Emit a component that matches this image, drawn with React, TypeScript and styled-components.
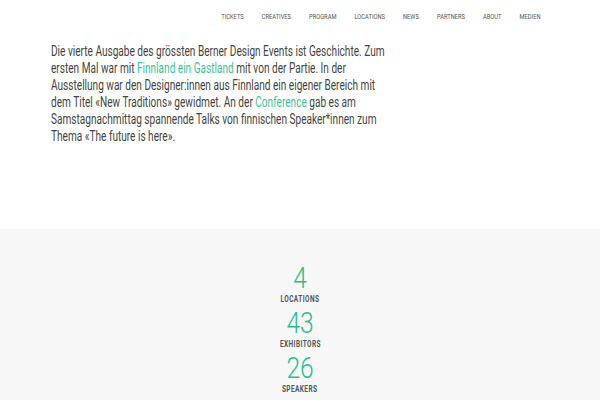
import styled, { createGlobalStyle } from "styled-components";

const GlobalStyle = createGlobalStyle`
  html, body {
    margin: 0;
    padding: 0;
    background: #ffffff;
  }
  body {
    font-family: "Roboto", "Liberation Sans", sans-serif;
    color: #3a3a3a;
  }
`;

const NAV_ITEMS = [
  "Tickets",
  "Creatives",
  "Program",
  "Locations",
  "News",
  "Partners",
  "About",
  "Medien",
];

const STATS = [
  { value: 4, label: "Locations" },
  { value: 43, label: "Exhibitors" },
  { value: 26, label: "Speakers" },
];

// the site uses a condensed grotesk; no condensed face is installed,
// so the Roboto text gets squeezed horizontally
const SQUEEZE = 0.72;

const Page = styled.div`
  width: 600px;
  height: 400px;
  overflow: hidden;
  display: flex;
  flex-direction: column;
`;

const NavBar = styled.nav`
  display: flex;
  justify-content: flex-end;
  padding: 11px 59px 0 0;
  height: 23px;
`;

const NavList = styled.div`
  display: flex;
  gap: 25px;
  transform: scaleX(${SQUEEZE});
  transform-origin: right top;
`;

const NavLink = styled.a`
  font-size: 8px;
  line-height: 12px;
  text-transform: uppercase;
  color: #555555;
  text-decoration: none;
`;

const Intro = styled.section`
  height: 195px;
  padding: 9px 0 0 51px;
  box-sizing: border-box;
`;

const Text = styled.p`
  margin: 0;
  width: 478px;
  font-size: 14px;
  line-height: 17px;
  color: #444444;
  transform: scaleX(${SQUEEZE});
  transform-origin: left top;
`;

const Highlight = styled.a`
  color: #3cbf9c;
  text-decoration: none;
`;

const Stats = styled.section`
  flex: 1;
  background: #f7f7f7;
  display: flex;
  flex-direction: column;
  align-items: center;
  padding-top: 34px;
`;

const Stat = styled.div`
  display: flex;
  flex-direction: column;
  align-items: center;
  height: 45px;
`;

const Value = styled.div`
  font-weight: 300;
  font-size: 29px;
  line-height: 30px;
  color: #2dbd8f;
  transform: scaleX(0.85);
`;

const Label = styled.div`
  font-weight: 700;
  font-size: 9px;
  line-height: 12px;
  letter-spacing: 0.6px;
  text-transform: uppercase;
  color: #4b5560;
  transform: scaleX(${SQUEEZE});
`;

export default function App() {
  return (
    <Page>
      <GlobalStyle />
      <NavBar>
        <NavList>
          {NAV_ITEMS.map((item) => (
            <NavLink key={item} href="#">
              {item}
            </NavLink>
          ))}
        </NavList>
      </NavBar>
      <Intro>
        <Text>
          Die vierte Ausgabe des grössten Berner Design Events ist Geschichte.
          Zum ersten Mal war mit <Highlight href="#">Finnland ein Gastland</Highlight>{" "}
          mit von der Partie. In der Ausstellung war den Designer:innen aus
          Finnland ein eigener Bereich mit dem Titel «New Traditions» gewidmet.
          An der <Highlight href="#">Conference</Highlight> gab es am
          Samstagnachmittag spannende Talks von finnischen Speaker*innen zum
          Thema «The future is here».
        </Text>
      </Intro>
      <Stats>
        {STATS.map((s) => (
          <Stat key={s.label}>
            <Value>{s.value}</Value>
            <Label>{s.label}</Label>
          </Stat>
        ))}
      </Stats>
    </Page>
  );
}
